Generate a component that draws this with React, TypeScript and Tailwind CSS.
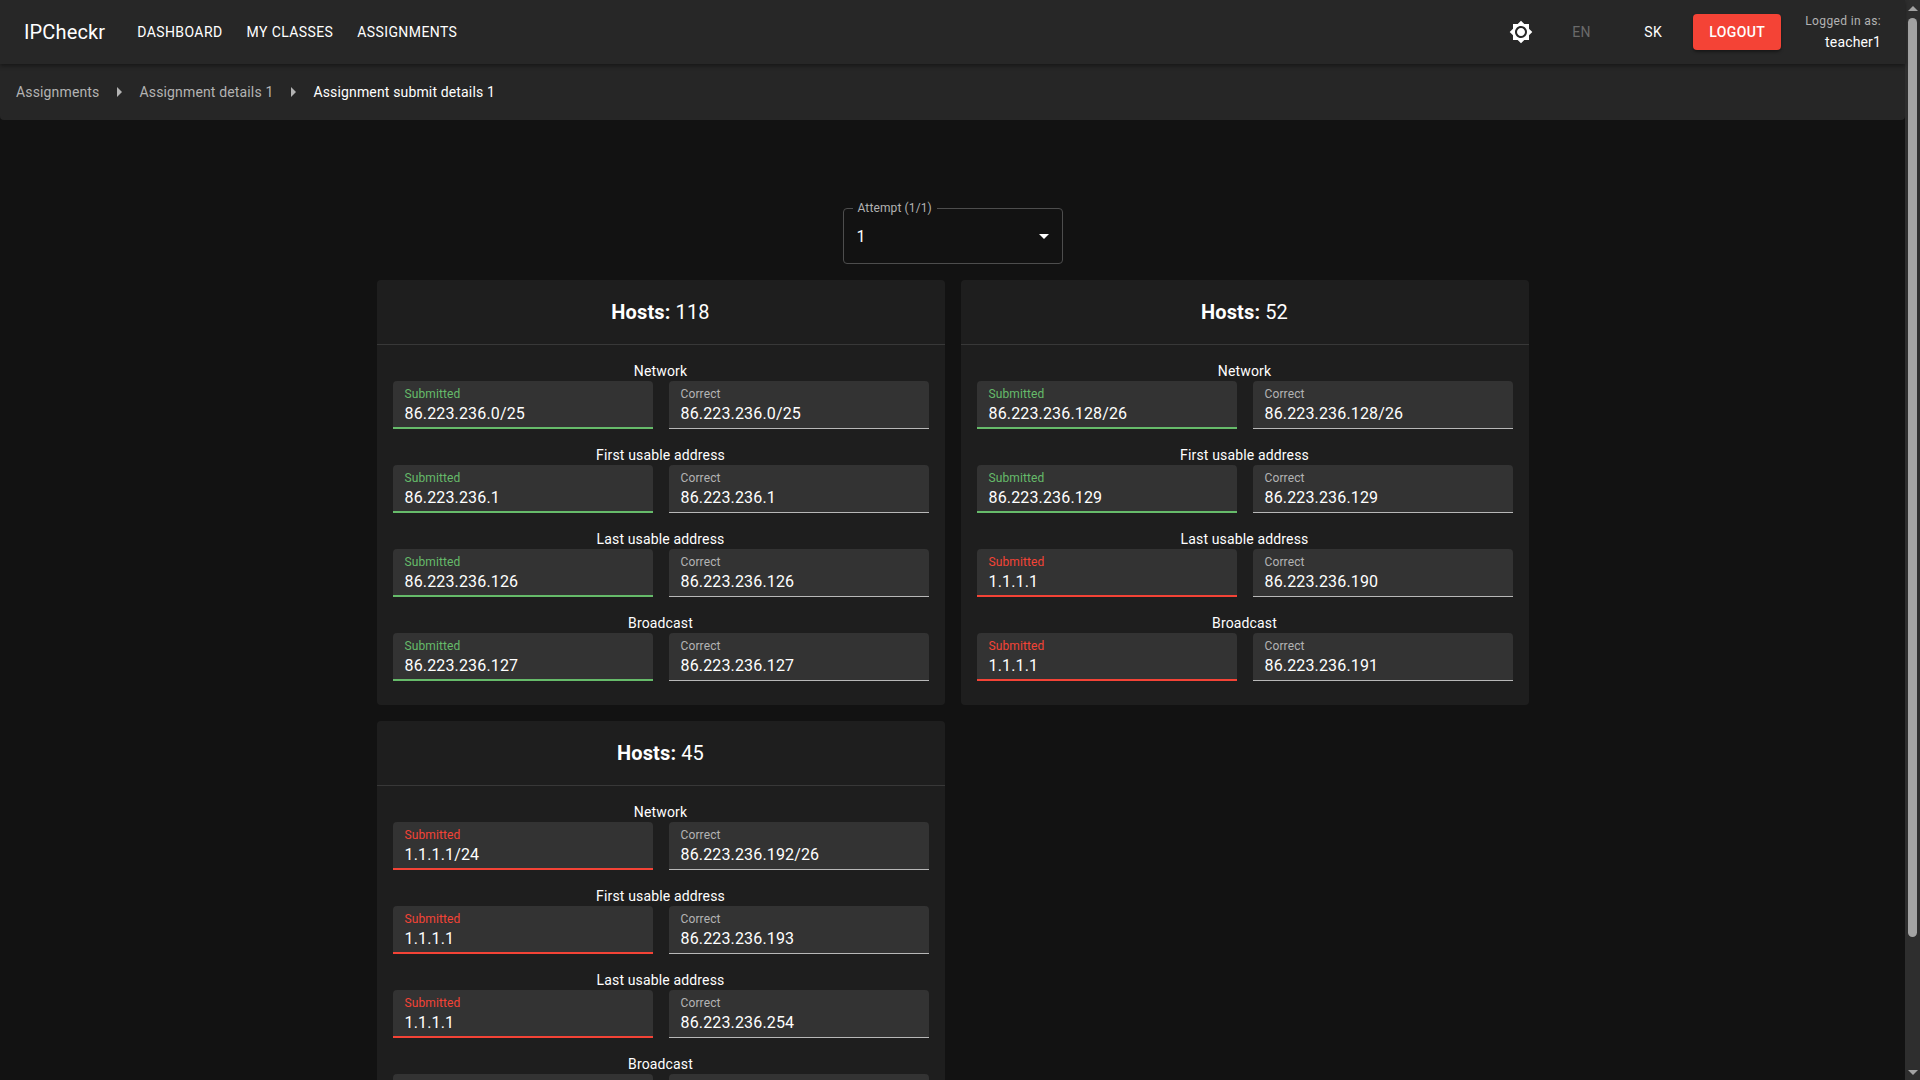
import {MdBrightness7} from "react-icons/md";

type Row = {
    label: string;
    submitted: string;
    correct: string;
    ok: boolean;
};

type Task = {
    hosts: number;
    rows: Row[];
};

const tasks: Task[] = [
    {
        hosts: 118,
        rows: [
            {label: "Network", submitted: "86.223.236.0/25", correct: "86.223.236.0/25", ok: true},
            {label: "First usable address", submitted: "86.223.236.1", correct: "86.223.236.1", ok: true},
            {label: "Last usable address", submitted: "86.223.236.126", correct: "86.223.236.126", ok: true},
            {label: "Broadcast", submitted: "86.223.236.127", correct: "86.223.236.127", ok: true},
        ],
    },
    {
        hosts: 52,
        rows: [
            {label: "Network", submitted: "86.223.236.128/26", correct: "86.223.236.128/26", ok: true},
            {label: "First usable address", submitted: "86.223.236.129", correct: "86.223.236.129", ok: true},
            {label: "Last usable address", submitted: "1.1.1.1", correct: "86.223.236.190", ok: false},
            {label: "Broadcast", submitted: "1.1.1.1", correct: "86.223.236.191", ok: false},
        ],
    },
    {
        hosts: 45,
        rows: [
            {label: "Network", submitted: "1.1.1.1/24", correct: "86.223.236.192/26", ok: false},
            {label: "First usable address", submitted: "1.1.1.1", correct: "86.223.236.193", ok: false},
            {label: "Last usable address", submitted: "1.1.1.1", correct: "86.223.236.254", ok: false},
            {label: "Broadcast", submitted: "1.1.1.1", correct: "86.223.236.255", ok: false},
        ],
    },
];

const Field = ({label, value, className, labelClassName}: {label: string; value: string; className: string; labelClassName: string}) => {
    return (
        <div className={`h-12 rounded-t bg-[#333333] px-3 pt-1.5 ${className}`}>
            <div className={`text-xs leading-[14px] tracking-[0.01em] ${labelClassName}`}>{label}</div>
            <div className="mt-[1px] text-base leading-6 tracking-[0.00938em] text-white">{value}</div>
        </div>
    );
};

const TaskCard = ({task}: {task: Task}) => {
    return (
        <div className="rounded bg-[#1e1e1e] pb-6">
            <div className="flex h-[65px] items-center justify-center border-b border-[#383838] text-xl tracking-[0.0075em] text-white">
                <span className="font-bold">Hosts:</span>
                <span className="ml-[5px]">{task.hosts}</span>
            </div>
            <div className="flex flex-col gap-4 px-4 pt-4">
                {task.rows.map((row) => (
                    <div key={row.label}>
                        <div className="text-center text-sm leading-5 tracking-[0.01071em] text-white">{row.label}</div>
                        <div className="grid grid-cols-2 gap-4">
                            <Field
                                label="Submitted"
                                value={row.submitted}
                                className={row.ok ? "border-b-2 border-[#66bb6a]" : "border-b-2 border-[#f44336]"}
                                labelClassName={row.ok ? "text-[#66bb6a]" : "text-[#f44336]"}
                            />
                            <Field
                                label="Correct"
                                value={row.correct}
                                className="border-b border-[#b8b8b8]"
                                labelClassName="text-[#b3b3b3]"
                            />
                        </div>
                    </div>
                ))}
            </div>
        </div>
    );
};

const Scrollbar = () => {
    return (
        <div className="flex h-screen w-[15px] shrink-0 flex-col items-center bg-[#2e2e2e]">
            <div className="mt-[6px] h-0 w-0 border-x-[5px] border-b-[5px] border-x-transparent border-b-[#a3a3a3]" />
            <div className="mt-[7px] h-[919px] w-[9px] rounded-full bg-[#a3a3a3]" />
            <div className="mt-auto mb-[5px] h-0 w-0 border-x-[5px] border-t-[5px] border-x-transparent border-t-[#a3a3a3]" />
        </div>
    );
};

const BreadcrumbArrow = () => {
    return <div className="ml-[18px] mr-[17px] h-0 w-0 border-y-[5px] border-l-[5px] border-y-transparent border-l-[#b3b3b3]" />;
};

const App = () => {
    return (
        <div className="flex h-screen overflow-hidden bg-[#121212] font-['Roboto',sans-serif]">
            <div className="min-w-0 flex-1">
                <div className="relative flex h-16 items-center bg-[#272727] pl-6 pr-6 shadow-[0_2px_4px_rgba(0,0,0,0.4)]">
                    <div className="text-xl tracking-[0.0075em] text-white">IPCheckr</div>
                    <nav className="ml-[24px] flex gap-2 text-sm uppercase tracking-[0.02857em] text-white">
                        <div className="px-2 py-1.5">Dashboard</div>
                        <div className="px-2 py-1.5">My classes</div>
                        <div className="px-2 py-1.5">Assignments</div>
                    </nav>
                    <div className="flex-1" />
                    <MdBrightness7 className="text-white" size={24} />
                    <div className="ml-[39px] w-[23px] text-sm tracking-[0.02857em] text-[#6a6a6a]">EN</div>
                    <div className="ml-[49px] w-[24px] text-sm tracking-[0.02857em] text-white">SK</div>
                    <div className="ml-[25px] flex h-9 w-[88px] items-center justify-center rounded bg-[#f44336] text-sm font-medium tracking-[0.02857em] text-white shadow-[0_2px_3px_rgba(0,0,0,0.4)]">LOGOUT</div>
                    <div className="ml-[24px] flex flex-col items-end">
                        <div className="text-xs leading-[18px] tracking-[0.03em] text-[#b3b3b3]">Logged in as:</div>
                        <div className="mt-[2px] text-sm leading-5 tracking-[0.01071em] text-white">teacher1</div>
                    </div>
                </div>
                <div className="flex h-14 items-center rounded-b bg-[#262626] pl-4 text-sm tracking-[0.01071em]">
                    <span className="text-[#b3b3b3]">Assignments</span>
                    <BreadcrumbArrow />
                    <span className="text-[#b3b3b3]">Assignment details 1</span>
                    <BreadcrumbArrow />
                    <span className="text-white">Assignment submit details 1</span>
                </div>
                <div className="mt-[88px] flex flex-col items-center">
                    <div className="relative h-14 w-[220px] rounded border border-[#4d4d4d]">
                        <div className="absolute -top-[9px] left-[9px] bg-[#121212] px-[5px] text-xs leading-4 tracking-[0.01em] text-[#b3b3b3]">Attempt (1/1)</div>
                        <div className="flex h-full items-center justify-between px-[13px] pt-[2px] text-base text-white">
                            <span>1</span>
                            <div className="-mt-[2px] h-0 w-0 border-x-[5px] border-t-[5px] border-x-transparent border-t-white" />
                        </div>
                    </div>
                    <div className="mt-4 grid w-[1152px] grid-cols-2 items-start gap-4">
                        {tasks.map((task) => (
                            <TaskCard key={task.hosts} task={task} />
                        ))}
                    </div>
                </div>
            </div>
            <Scrollbar />
        </div>
    );
};

export default App;
